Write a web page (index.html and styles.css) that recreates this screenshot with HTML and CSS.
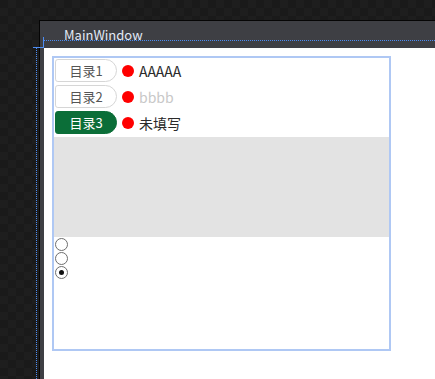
FILE: index.html
```html
<!DOCTYPE html>
<html lang="zh">
<head>
  <meta charset="UTF-8">
  <title>MainWindow</title>
  <link rel="stylesheet" href="styles.css">
</head>
<body>

  <div class="window">
    <div class="titlebar">
      <span class="title">MainWindow</span>
    </div>
    <div class="client">
      <div class="frame">
        <div class="row">
          <button class="tab">目录1</button>
          <span class="dot"></span>
          <span class="label">AAAAA</span>
        </div>
        <div class="row">
          <button class="tab">目录2</button>
          <span class="dot"></span>
          <span class="label muted">bbbb</span>
        </div>
        <div class="row">
          <button class="tab active">目录3</button>
          <span class="dot"></span>
          <span class="label">未填写</span>
        </div>
        <div class="panel"></div>
        <div class="radios">
          <span class="radio"></span>
          <span class="radio"></span>
          <span class="radio checked"></span>
        </div>
      </div>
    </div>
  </div>

  <!-- designer guide lines -->
  <div class="guide-h"></div>
  <div class="guide-v"></div>
  <div class="mark-v"></div>
  <div class="mark-h"></div>

</body>
</html>
```

FILE: styles.css
```css
html, body {
  margin: 0;
  height: 100%;
  overflow: hidden;
}
body {
  background-color: #1c1c1c;
  background-image: repeating-conic-gradient(#1e1e1e 0 25%, #1a1a1a 0 50%);
  background-size: 16px 16px;
  font-family: "Noto Sans CJK SC", "Noto Sans", sans-serif;
  position: relative;
}
.window {
  margin: 20px 0 0 39px;
  border-top: 1px solid #050505;
  border-left: 1px solid #050505;
  background: #3e3f44;
  height: 358px;
  display: flex;
  flex-direction: column;
}
.titlebar {
  height: 27px;
  padding-left: 24px;
}
.title {
  display: inline-block;
  color: #e2e9f6;
  font-size: 13px;
  line-height: 13px;
  padding-top: 7px;
}
.client {
  flex: 1;
  margin-left: 4px;
  background: #ffffff;
  padding: 8px 0 0 8px;
}
.frame {
  width: 335px;
  height: 290px;
  border: 2px solid #afc8f4;
  padding-top: 1px;
  box-sizing: content-box;
}
.row {
  display: flex;
  align-items: center;
  height: 23px;
  margin-bottom: 3px;
  padding-left: 1px;
}
.tab {
  width: 62px;
  height: 23px;
  box-sizing: border-box;
  border: 1px solid #d6d6d6;
  border-radius: 3px 12px 12px 3px;
  background: #ffffff;
  color: #555555;
  font-family: "Noto Sans CJK SC", "Noto Sans", sans-serif;
  font-size: 13px;
  line-height: 20px;
  padding: 0;
}
.tab.active {
  background: #0b6e38;
  border-color: #0b6e38;
  color: #ffffff;
}
.dot {
  width: 12px;
  height: 12px;
  border-radius: 50%;
  background: #ff0000;
  margin-left: 5px;
}
.label {
  margin-left: 5px;
  font-size: 14px;
  color: #2a2a2a;
}
.label.muted {
  color: #c8c8c8;
}
.panel {
  background: #e3e3e3;
  height: 100px;
}
.radios {
  display: flex;
  flex-direction: column;
  gap: 1px;
  padding: 1px 0 0 1px;
}
.radio {
  width: 11px;
  height: 11px;
  border: 1px solid #6e6e6e;
  border-radius: 50%;
  background: #ffffff;
  position: relative;
}
.radio.checked::after {
  content: "";
  position: absolute;
  left: 3px;
  top: 3px;
  width: 5px;
  height: 5px;
  border-radius: 50%;
  background: #111111;
}
.guide-h {
  position: absolute;
  left: 44px;
  right: 0;
  top: 40px;
  border-top: 1px dotted #4d8cf2;
}
.guide-v {
  position: absolute;
  left: 36px;
  top: 48px;
  bottom: 0;
  border-left: 1px dotted #4d8cf2;
}
.mark-v {
  position: absolute;
  left: 43px;
  top: 37px;
  height: 11px;
  border-left: 1px solid #4d8cf2;
}
.mark-h {
  position: absolute;
  left: 33px;
  top: 47px;
  width: 10px;
  border-top: 1px solid #4d8cf2;
}
```
